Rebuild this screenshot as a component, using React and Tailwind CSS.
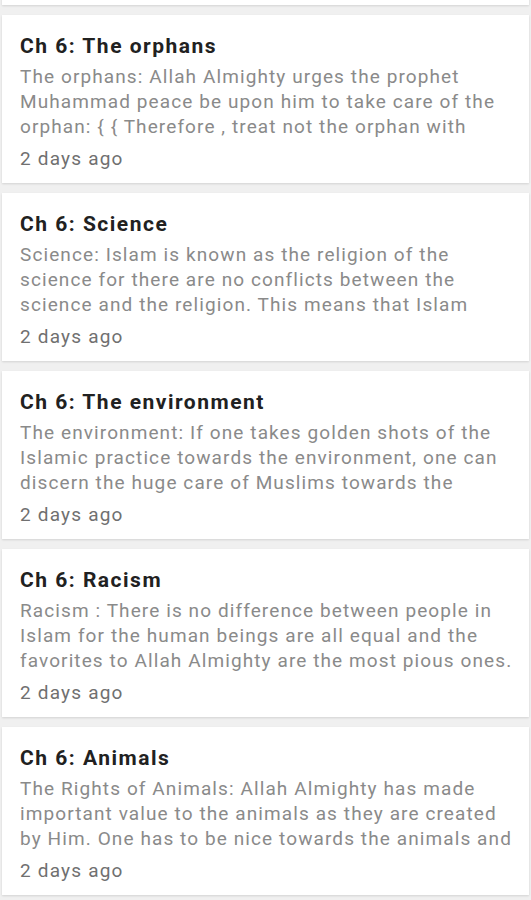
import React from "react";

const posts = [
  {
    title: "Ch 6: The orphans",
    lines: [
      "The orphans: Allah Almighty urges the prophet",
      "Muhammad peace be upon him to take care of the",
      "orphan: { { Therefore , treat not the orphan with",
    ],
  },
  {
    title: "Ch 6: Science",
    lines: [
      "Science: Islam is known as the religion of the",
      "science for there are no conflicts between the",
      "science and the religion. This means that Islam",
    ],
  },
  {
    title: "Ch 6: The environment",
    lines: [
      "The environment: If one takes golden shots of the",
      "Islamic practice towards the environment, one can",
      "discern the huge care of Muslims towards the",
    ],
  },
  {
    title: "Ch 6: Racism",
    lines: [
      "Racism : There is no difference between people in",
      "Islam for the human beings are all equal and the",
      "favorites to Allah Almighty are the most pious ones.",
    ],
  },
  {
    title: "Ch 6: Animals",
    lines: [
      "The Rights of Animals: Allah Almighty has made",
      "important value to the animals as they are created",
      "by Him. One has to be nice towards the animals and",
    ],
  },
];

function PostCard({ post }) {
  return (
    <div className="bg-white mx-[2px] h-[168px] pl-[18px] pr-[10px] pt-[18px] shadow-[0_1px_2px_rgba(0,0,0,0.12)]">
      <div className="text-[21px] leading-[26px] font-bold tracking-[1.5px] text-[#212121] whitespace-nowrap">
        {post.title}
      </div>
      <div className="mt-[5px] text-[19px] leading-[25px] tracking-[1.1px] text-[#8a8a8a] h-[75px] overflow-hidden whitespace-nowrap">
        {post.lines.map((line) => (
          <div key={line}>{line}</div>
        ))}
      </div>
      {post.title && (
        <div className="mt-[7px] text-[19px] leading-[25px] tracking-[1.2px] text-[#707070]">
          2 days ago
        </div>
      )}
    </div>
  );
}

export default function App() {
  return (
    <div
      className="w-[531px] h-[900px] overflow-hidden bg-[#f0f0f0]"
      style={{ fontFamily: "Roboto, 'Liberation Sans', sans-serif" }}
    >
      <div className="-mt-[163px] flex flex-col gap-[10px]">
        <PostCard post={{ title: "", lines: [] }} />
        {posts.map((post) => (
          <PostCard key={post.title} post={post} />
        ))}
      </div>
    </div>
  );
}
